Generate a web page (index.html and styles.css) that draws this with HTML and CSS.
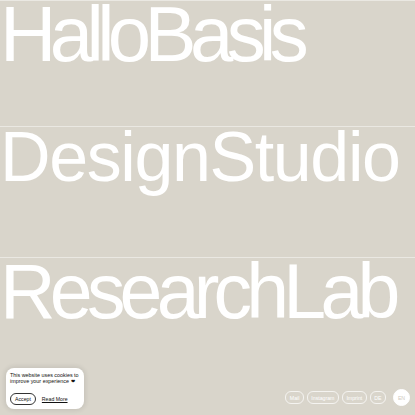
FILE: index.html
```html
<!DOCTYPE html>
<html lang="de">
<head>
<meta charset="utf-8">
<title>HalloBasis</title>
<link rel="stylesheet" href="styles.css">
</head>
<body>
<main class="rows">
  <section class="row row-1"><h1 class="word">HalloBasis</h1></section>
  <section class="row row-2"><h2 class="word">DesignStudio</h2></section>
  <section class="row row-3"><h2 class="word">ResearchLab</h2></section>
</main>

<div class="cookie">
  <p class="cookie-text">This website uses cookies to<br>improve your experience ❤</p>
  <div class="cookie-actions">
    <button class="accept">Accept</button>
    <a class="more" href="#">Read More</a>
  </div>
</div>

<nav class="links">
  <a class="pill" href="#">Mail</a>
  <a class="pill" href="#">Instagram</a>
  <a class="pill" href="#">Imprint</a>
  <a class="pill" href="#">DE</a>
  <a class="pill pill-active" href="#">EN</a>
</nav>
</body>
</html>
```

FILE: styles.css
```css
html, body {
  margin: 0;
  padding: 0;
}
body {
  width: 415px;
  height: 415px;
  overflow: hidden;
  background: #d9d5cb;
  font-family: "Liberation Sans", Arial, sans-serif;
  position: relative;
}
.rows {
  display: flex;
  flex-direction: column;
}
.row {
  border-top: 1px solid rgba(255, 255, 255, 0.45);
}
.row-1 { height: 125px; }
.row-2 { height: 130px; }
.row-3 { height: 158px; }
.word {
  margin: 0;
  color: #ffffff;
  font-weight: 400;
  font-size: 78px;
  line-height: 66px;
  letter-spacing: -0.085em;
  white-space: nowrap;
}
.row-2 .word {
  font-size: 70px;
  line-height: 61px;
  letter-spacing: -0.02em;
}
.row-3 .word {
  font-size: 77px;
  line-height: 66px;
  letter-spacing: -0.075em;
}

.cookie {
  position: absolute;
  left: 6px;
  top: 368px;
  width: 70px;
  height: 33px;
  padding: 4px;
  background: #ffffff;
  border-radius: 8px;
  box-shadow: 0 0 4px 2px rgba(0, 0, 0, 0.08);
  display: flex;
  flex-direction: column;
  justify-content: space-between;
}
.cookie-text {
  margin: 0;
  font-size: 5.4px;
  line-height: 6px;
  color: #111111;
}
.cookie-actions {
  display: flex;
  align-items: center;
  gap: 6px;
}
.accept {
  font-family: inherit;
  font-size: 5.2px;
  color: #111111;
  background: #ffffff;
  border: 0.8px solid #333333;
  border-radius: 8px;
  padding: 0 4px;
  height: 12px;
  line-height: 10px;
}
.more {
  font-size: 5.2px;
  color: #111111;
  text-decoration: underline;
}

.links {
  position: absolute;
  right: 5px;
  top: 390px;
  height: 15px;
  display: flex;
  align-items: center;
  gap: 3px;
}
.pill {
  display: flex;
  align-items: center;
  height: 11px;
  padding: 0 3.5px;
  border: 0.8px solid rgba(255, 255, 255, 0.7);
  border-radius: 6px;
  color: #ffffff;
  font-size: 5.2px;
  text-decoration: none;
}
.pill-active {
  height: 15px;
  width: 15px;
  padding: 0;
  justify-content: center;
  border-radius: 50%;
  border-color: #ffffff;
  background: #ffffff;
  color: #cfcac0;
  margin-left: 4px;
}
```
